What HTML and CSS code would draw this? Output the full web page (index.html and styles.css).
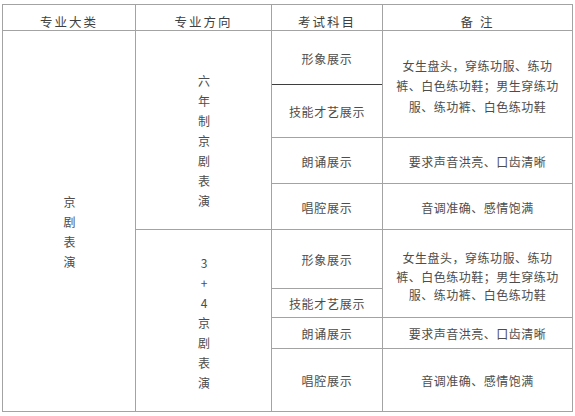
FILE: index.html
```html
<!DOCTYPE html>
<html lang="zh-CN">
<head>
<meta charset="utf-8">
<title>京剧表演 考试科目</title>
<link rel="stylesheet" href="styles.css">
</head>
<body>
<div class="sheet">
  <div class="cell head">专业大类</div>
  <div class="cell head">专业方向</div>
  <div class="cell head">考试科目</div>
  <div class="cell head">备 注</div>

  <div class="cell cat"><span class="vert">京剧表演</span></div>

  <div class="cell dir dir-a"><span class="vert">六年制京剧表演</span></div>
  <div class="cell subj">形象展示</div>
  <div class="cell note note-a">女生盘头，穿练功服、练功<br>裤、白色练功鞋；男生穿练功<br>服、练功裤、白色练功鞋</div>
  <div class="cell subj subj-dark">技能才艺展示</div>
  <div class="cell subj">朗诵展示</div>
  <div class="cell note">要求声音洪亮、口齿清晰</div>
  <div class="cell subj">唱腔展示</div>
  <div class="cell note">音调准确、感情饱满</div>

  <div class="cell dir dir-b"><span class="vert">3+4京剧表演</span></div>
  <div class="cell subj">形象展示</div>
  <div class="cell note note-b">女生盘头，穿练功服、练功<br>裤、白色练功鞋；男生穿练功<br>服、练功裤、白色练功鞋</div>
  <div class="cell subj">技能才艺展示</div>
  <div class="cell subj">朗诵展示</div>
  <div class="cell note">要求声音洪亮、口齿清晰</div>
  <div class="cell subj">唱腔展示</div>
  <div class="cell note">音调准确、感情饱满</div>
</div>
</body>
</html>
```
FILE: styles.css
```css
html, body {
  margin: 0;
  background: #ffffff;
}

body {
  font-family: "Noto Sans CJK SC", sans-serif;
  color: #4d4d4d;
}

.sheet {
  box-sizing: border-box;
  width: 571px;
  margin: 4px 0 0 2px;
  padding: 1px;
  display: grid;
  grid-template-columns: 132px 135px 110px 189px;
  grid-template-rows: 25px 53px 52px 45px 45px 58px 28px 30px 62px;
  gap: 1px;
  background: #a3a3a3;
}

.cell {
  background: #ffffff;
  display: flex;
  align-items: center;
  justify-content: center;
  text-align: center;
  font-size: 12px;
  line-height: 1;
}

.head {
  font-size: 12.5px;
  letter-spacing: 2px;
  padding-top: 9px;
  color: #3f3f3f;
}

.cat {
  grid-column: 1;
  grid-row: 2 / 10;
  padding-top: 29px;
}

.dir {
  grid-column: 2;
}

.dir-a {
  grid-row: 2 / 6;
  padding-top: 30px;
}

.dir-b {
  grid-row: 6 / 10;
  padding-top: 12px;
}

.vert {
  writing-mode: vertical-rl;
  text-orientation: upright;
  letter-spacing: 8px;
  line-height: 1;
}

.subj {
  grid-column: 3;
  letter-spacing: 0.7px;
  padding-top: 2px;
}

.subj-dark {
  box-shadow: 0 -1px 0 #3e3e3e;
}

.note {
  grid-column: 4;
  letter-spacing: 0.5px;
  padding-top: 2px;
}

.note-a {
  grid-row: 2 / 4;
  line-height: 20.5px;
  padding-top: 5px;
}

.note-b {
  grid-row: 6 / 8;
  line-height: 18.5px;
  padding-top: 7px;
}
```
